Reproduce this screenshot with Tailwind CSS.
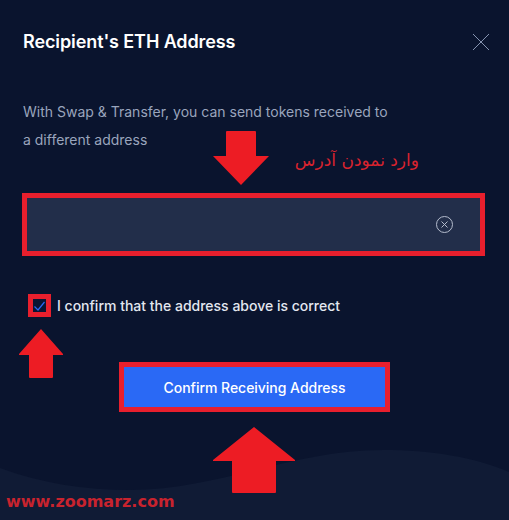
<!DOCTYPE html>
<html lang="en">
<head>
    <meta charset="UTF-8">
    <meta name="viewport" content="width=device-width, initial-scale=1.0">
    <title>Recipient's ETH Address</title>
    <script src="https://cdn.jsdelivr.net/npm/@tailwindcss/browser@4"></script>
</head>
<body class="bg-[#0a142e] font-[Inter,sans-serif] overflow-hidden">
    <div class="relative w-[509px] h-[520px] overflow-hidden">

        <!-- Wave at the bottom -->
        <svg class="absolute left-0 bottom-0" width="509" height="70" viewBox="0 450 509 70">
            <path d="M0 468C40 483 85 490 130 490C220 490 290 450 383 450C430 450 475 457 509 472V520H0Z" fill="#101b35"/>
        </svg>

        <!-- Modal content -->
        <div class="relative flex flex-col">
            <div class="flex items-center justify-between pl-[23px] pr-[20px] pt-[29px]">
                <h2 class="text-[18px] leading-[26px] font-semibold tracking-[-0.1px] text-white">Recipient's ETH Address</h2>
                <svg width="16" height="16" viewBox="0 0 16 16" stroke="#8593b0" stroke-width="1" fill="none">
                    <path d="M0 0L16 16M16 0L0 16"/>
                </svg>
            </div>

            <p class="mt-[43px] px-[23px] text-[14px] leading-[28px] text-[#9aa5bd] w-[420px]">With Swap &amp; Transfer, you can send tokens received to a different address</p>

            <div class="mt-[39px] mx-[22px] w-[463px] h-[63px] border-[5px] border-[#e81f2d] bg-[#222e4a] flex items-center justify-end pr-[27px]">
                <svg width="17" height="17" viewBox="0 0 17 17" stroke="#b4bccd" stroke-width="1" fill="none">
                    <circle cx="8.5" cy="8.5" r="8"/>
                    <path d="M5.5 5.5L11.5 11.5M11.5 5.5L5.5 11.5"/>
                </svg>
            </div>

            <div class="mt-[38px] ml-[28px] flex items-center gap-[6px]">
                <div class="w-[23px] h-[23px] border-[5px] border-[#e81f2d] bg-[#0a1533] flex items-center justify-center">
                    <svg width="11" height="10" viewBox="0 0 11 10" stroke="#2a69f5" stroke-width="1.2" fill="none">
                        <path d="M0.5 5.5L4 9L10.5 1"/>
                    </svg>
                </div>
                <span class="text-[14px] leading-[20px] font-medium text-[#e3e7f0]">I confirm that the address above is correct</span>
            </div>

            <button class="mt-[45px] mx-auto w-[271px] h-[50px] border-[5px] border-[#e81f2d] bg-[#2a69f5] text-[14px] font-medium tracking-[-0.03px] text-white">Confirm Receiving Address</button>
        </div>

        <!-- Red annotation arrows -->
        <svg class="absolute left-0 top-0" width="509" height="520" fill="#ed1c24">
            <path d="M226 132Q226 131 227 131H255Q256 131 256 132V156H269L241 185L213 156H226Z"/>
            <path d="M41 329L63 354V355H53V377Q53 378 52 378H30Q29 378 29 377V355H19V354Z"/>
            <path d="M254 427L295 460V461H276V492Q276 493 275 493H233Q232 493 232 492V461H213V460Z"/>
        </svg>

        <!-- Annotation text -->
        <span dir="rtl" class="absolute left-[295px] top-[146px] w-[124px] whitespace-nowrap text-[17px] leading-[28px] text-[#d9232e] font-['DejaVu_Sans',sans-serif]">وارد نمودن آدرس</span>
        <span class="absolute left-[6px] top-[491px] text-[16px] leading-[22px] font-bold text-[#c8232e] font-['DejaVu_Sans',sans-serif]">www.zoomarz.com</span>
    </div>
</body>
</html>
